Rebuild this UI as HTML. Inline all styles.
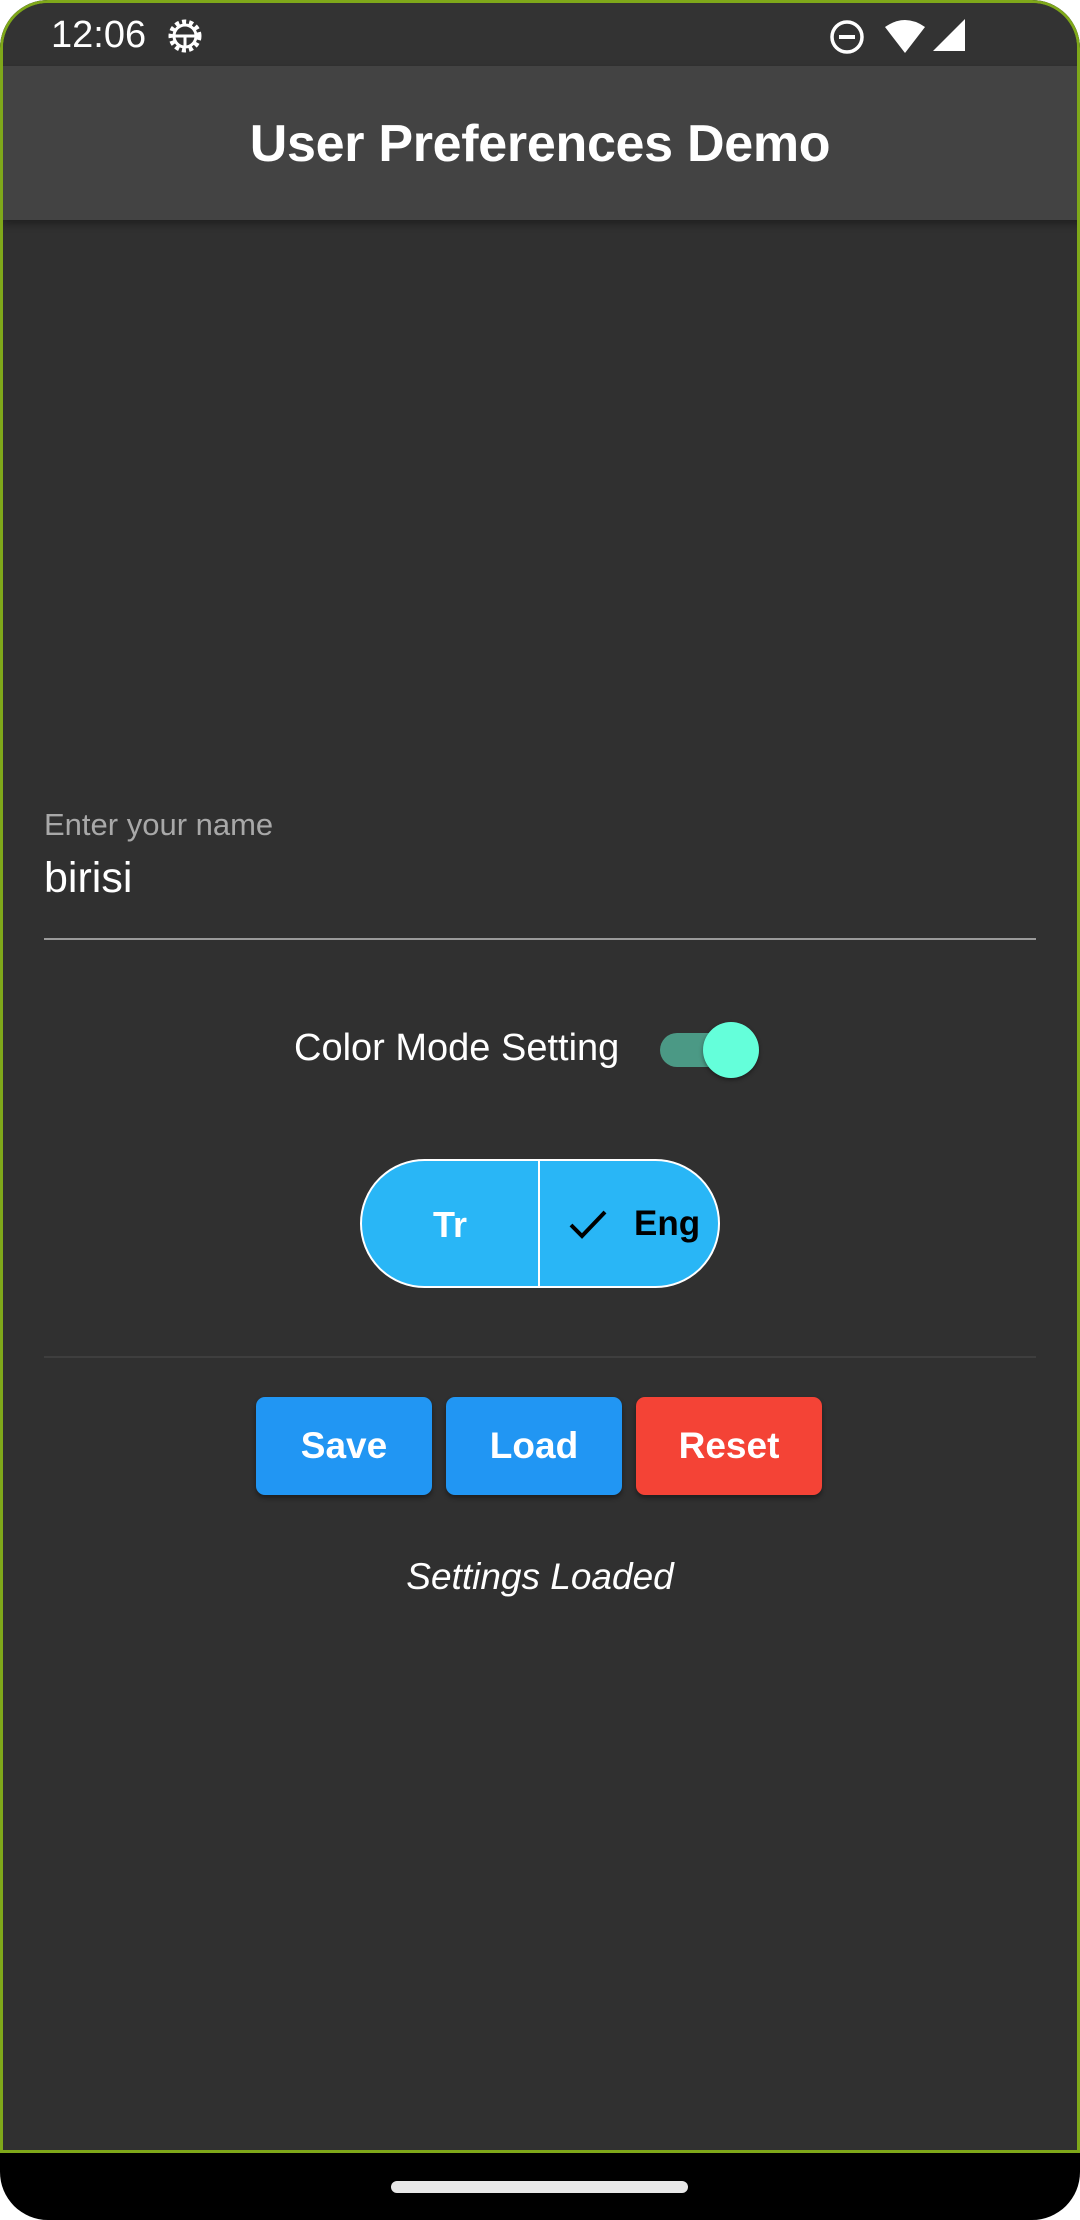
<!DOCTYPE html>
<html><head><meta charset="utf-8"><style>
html,body{margin:0;padding:0;background:#fff;}
body{width:1080px;height:2220px;position:relative;overflow:hidden;font-family:"Liberation Sans",sans-serif;}
.screen{position:absolute;left:0;top:0;width:1080px;height:2220px;background:#000;border-radius:48px;overflow:hidden;}
.app{position:absolute;left:0;top:0;width:1080px;height:2153px;background:#303030;box-sizing:border-box;border:3px solid #7fa81a;border-radius:48px 48px 0 0;overflow:hidden;}
.status{position:absolute;left:0;top:0;width:1080px;height:63px;background:#333;}
.appbar{position:absolute;left:0;top:63px;width:1080px;height:154px;background:#434343;box-shadow:0 4px 8px rgba(0,0,0,.35);}
.t{position:absolute;white-space:nowrap;}
.btn{position:absolute;top:1394px;height:98px;border-radius:9px;color:#fff;font-weight:bold;font-size:37px;display:flex;align-items:center;justify-content:center;box-shadow:0 3px 5px rgba(0,0,0,.4);}
</style></head><body>
<div class="screen">
<div class="app">
 <div class="status">
  <div class="t" style="left:48px;top:11px;font-size:38px;color:#fff;">12:06</div>
  <svg style="position:absolute;left:162px;top:13px" width="40" height="40" viewBox="0 0 40 40"><circle cx="20" cy="20" r="14" fill="none" stroke="#fff" stroke-width="5" stroke-dasharray="4 3"/><circle cx="20" cy="20" r="11" fill="none" stroke="#fff" stroke-width="3"/><path d="M10 20h20M20 20v10" stroke="#fff" stroke-width="3"/></svg>
  <svg style="position:absolute;left:826px;top:16px" width="36" height="36" viewBox="0 0 36 36"><circle cx="18" cy="18" r="15" fill="none" stroke="#fff" stroke-width="3.5"/><rect x="10" y="16" width="16" height="4" fill="#fff"/></svg>
  <svg style="position:absolute;left:880px;top:16px" width="44" height="36" viewBox="0 0 44 36"><path d="M2 8 Q22 -6 42 8 L22 34 Z" fill="#fff"/></svg>
  <svg style="position:absolute;left:928px;top:14px" width="36" height="36" viewBox="0 0 36 36"><path d="M34 2 V34 H2 Z" fill="#fff"/></svg>
 </div>
 <div class="appbar">
  <div class="t" style="left:0;width:1074px;text-align:center;top:48px;font-size:52px;color:#fff;font-weight:bold;letter-spacing:-0.3px;">User Preferences Demo</div>
 </div>
 <div class="t" style="left:41px;top:804px;font-size:31px;color:#a8a8a8;">Enter your name</div>
 <div class="t" style="left:41px;top:851px;font-size:43px;color:#fff;">birisi</div>
 <div style="position:absolute;left:41px;top:935px;width:992px;height:2px;background:#9a9a9a;"></div>
 <div class="t" style="left:291px;top:1024px;font-size:38px;color:#fff;">Color Mode Setting</div>
 <div style="position:absolute;left:657px;top:1030px;width:95px;height:34px;border-radius:17px;background:#4b9985;"></div>
 <div style="position:absolute;left:700px;top:1019px;width:56px;height:56px;border-radius:50%;background:#64ffda;box-shadow:0 2px 4px rgba(0,0,0,.4);"></div>
 <div style="position:absolute;left:357px;top:1156px;width:360px;height:129px;box-sizing:border-box;border:2px solid #fff;border-radius:65px;background:#29b6f6;overflow:hidden;">
  <div style="position:absolute;left:176px;top:0;width:2px;height:129px;background:#fff;"></div>
  <div class="t" style="left:0;width:176px;text-align:center;top:43px;font-size:36px;font-weight:bold;color:#fff;">Tr</div>
  <svg style="position:absolute;left:206px;top:46px" width="40" height="34" viewBox="0 0 40 34"><path d="M3 18 L14 29 L37 5" fill="none" stroke="#000" stroke-width="4"/></svg>
  <div class="t" style="left:272px;top:43px;font-size:35px;font-weight:bold;color:#000;">Eng</div>
 </div>
 <div style="position:absolute;left:41px;top:1353px;width:992px;height:2px;background:#3e3e3e;"></div>
 <div class="btn" style="left:253px;width:176px;background:#2196f3;">Save</div>
 <div class="btn" style="left:443px;width:176px;background:#2196f3;">Load</div>
 <div class="btn" style="left:633px;width:186px;background:#f44336;">Reset</div>
 <div class="t" style="left:0;width:1074px;text-align:center;top:1553px;font-size:37px;font-style:italic;color:#fff;">Settings Loaded</div>
</div>
<div style="position:absolute;left:391px;top:2181px;width:297px;height:12px;border-radius:6px;background:#e8e8e8;"></div>
</div>
</body></html>
